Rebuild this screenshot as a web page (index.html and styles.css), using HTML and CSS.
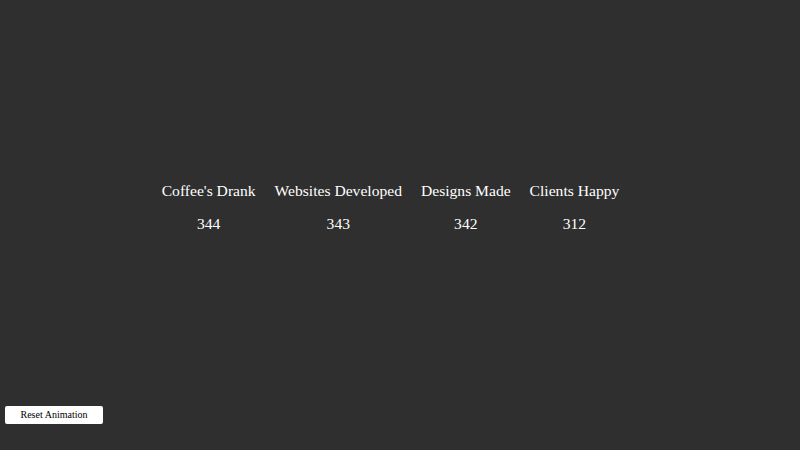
FILE: index.html
```html
<!DOCTYPE html>
<html>
<head>
<meta charset="utf-8">
<link rel="stylesheet" href="styles.css">
</head>
<body>
<main class="stage">
  <div class="counters">
    <div class="counter">
      <div class="label">Coffee's Drank</div>
      <div class="value">344</div>
    </div>
    <div class="counter">
      <div class="label">Websites Developed</div>
      <div class="value">343</div>
    </div>
    <div class="counter">
      <div class="label">Designs Made</div>
      <div class="value">342</div>
    </div>
    <div class="counter">
      <div class="label">Clients Happy</div>
      <div class="value">312</div>
    </div>
  </div>
</main>
<footer class="controls">
  <button class="reset">Reset Animation</button>
</footer>
</body>
</html>
```
FILE: styles.css
```css
html, body {
  margin: 0;
  padding: 0;
  height: 100%;
}
body {
  background: #2f2f2f;
  color: #ffffff;
  font-family: "Liberation Serif", "Times New Roman", serif;
  display: flex;
  flex-direction: column;
}
.stage {
  flex: 1;
  display: flex;
  align-items: center;
  justify-content: center;
  padding-top: 10px;
}
.counters {
  display: flex;
}
.counter {
  display: flex;
  flex-direction: column;
  align-items: center;
  padding-right: 19px;
  gap: 14px;
}
.label,
.value {
  font-size: 15.6px;
  line-height: 19px;
}
.controls {
  padding: 0 0 26px 5px;
}
.reset {
  width: 98px;
  height: 18px;
  padding: 0;
  background: #ffffff;
  color: #000000;
  border: none;
  border-radius: 2px;
  font-family: "Liberation Serif", "Times New Roman", serif;
  font-size: 10px;
  line-height: 18px;
  text-align: center;
}
```
